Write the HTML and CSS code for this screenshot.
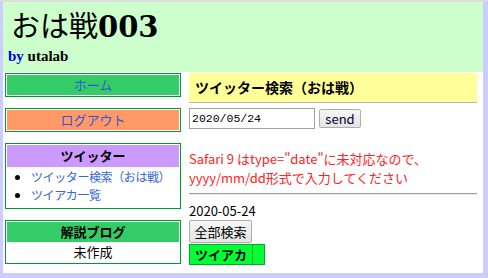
FILE: index.html
```html
<!DOCTYPE html>
<html lang="ja">
<head>
    <meta charset="UTF-8">
    <title>おは戦003</title>
    <link rel="stylesheet" href="styles.css">
</head>
<body>
    <div class="page">
        <header class="top">
            <h1><span class="jp">おは戦</span>003</h1>
            <p class="by"><span>by</span> utalab</p>
        </header>
        <div class="columns">
            <nav class="side">
                <div class="box home"><a href="#">ホーム</a></div>
                <div class="box logout"><a href="#">ログアウト</a></div>
                <div class="box">
                    <div class="box-title purple">ツイッター</div>
                    <ul>
                        <li><a href="#">ツイッター検索（おは戦）</a></li>
                        <li><a href="#">ツイアカ一覧</a></li>
                    </ul>
                </div>
                <div class="box">
                    <div class="box-title green">解説ブログ</div>
                    <div class="box-text">未作成</div>
                </div>
            </nav>
            <main class="main">
                <h2>ツイッター検索（おは戦）</h2>
                <form class="search">
                    <input type="text" value="2020/05/24">
                    <button type="button">send</button>
                </form>
                <p class="note">Safari 9 はtype="date"に未対応なので、<br>yyyy/mm/dd形式で入力してください</p>
                <hr>
                <div class="date">2020-05-24</div>
                <button type="button" class="all">全部検索</button>
                <table class="acct">
                    <tr><td>ツイアカ</td><td></td></tr>
                </table>
            </main>
        </div>
    </div>
</body>
</html>
```

FILE: styles.css
```css
/* General Styles */
body {
    margin: 0;
    background: #ccccff;
    border-top: 2px solid #dddddd;
    font-family: "Noto Sans CJK JP", "DejaVu Sans", sans-serif;
    font-size: 13px;
    color: #000;
}

.page {
    margin: 0 5px 5px 3px;
    background: #ffffff;
}

/* Header */
.top {
    background: #ccffcc;
    height: 70px;
    padding-left: 8px;
    box-sizing: border-box;
}

.top h1 {
    margin: 0;
    padding-top: 3px;
    font-family: "DejaVu Serif", "Noto Sans CJK JP", serif;
    font-size: 29px;
    font-weight: bold;
    line-height: 38px;
}

.top h1 .jp {
    font-family: "Noto Sans CJK JP", serif;
    font-weight: normal;
    font-size: 29px;
}

.by {
    margin: 0;
    margin-left: -3px;
    font-family: "Liberation Serif", serif;
    font-size: 15px;
    font-weight: bold;
    line-height: 20px;
}

.by span {
    color: #0000ee;
}

/* Columns */
.columns {
    display: flex;
    padding: 1px 6px 8px 2px;
}

.side {
    width: 176px;
    flex: none;
    display: flex;
    flex-direction: column;
    gap: 11px;
}

.box {
    border: 1px solid #009933;
    padding: 1px;
    text-align: center;
}

.box a {
    color: #3355dd;
    text-decoration: none;
}

.home, .logout {
    line-height: 20px;
}

.home a, .logout a {
    display: block;
}

.home a {
    background: #33cc66;
}

.logout a {
    background: #ff9966;
}

.box-title {
    font-weight: bold;
    line-height: 20px;
}

.purple {
    background: #cc99ff;
    line-height: 22px;
}

.green {
    background: #33cc66;
}

.box-text {
    line-height: 20px;
}

.box ul {
    margin: 1px 0 3px;
    padding-left: 24px;
    text-align: left;
    font-size: 12px;
    letter-spacing: -0.4px;
    line-height: 18px;
    white-space: nowrap;
}

.box ul a {
    color: #3366dd;
}

/* Main */
.main {
    flex: 1;
    margin-left: 8px;
}

.main h2 {
    margin: 0;
    background: #ffff99;
    border-bottom: 1px solid #bbbbbb;
    padding-left: 6px;
    font-size: 14px;
    line-height: 29px;
}

.search {
    margin: 5px 0 0;
    display: flex;
    align-items: center;
    gap: 4px;
}

.search input {
    width: 126px;
    height: 21px;
    box-sizing: border-box;
    border: 1px solid #a0a0a0;
    padding: 0 2px;
    font-family: "Liberation Mono", monospace;
    font-size: 11.5px;
    margin: 0;
}

.search button, .all {
    font-family: "Noto Sans CJK JP", sans-serif;
    font-size: 13px;
    background: linear-gradient(#f6f6f6, #e4e4e4);
    border: 1px solid #adadad;
    border-radius: 2px;
    padding: 0;
    margin: 0;
}

.search button {
    width: 42px;
    height: 19px;
    line-height: 17px;
    color: #000033;
}

.note {
    margin: 20px 0 0;
    color: #ff2222;
    line-height: 19px;
}

hr {
    margin: 6px 0 0;
    border: none;
    border-top: 1px solid #a0a0a0;
    border-bottom: 1px solid #e8e8e8;
}

.date {
    margin-top: 7px;
    line-height: 18px;
}

.all {
    display: block;
    width: 63px;
    height: 23px;
    line-height: 21px;
}

.acct {
    margin-top: 1px;
    border-collapse: collapse;
    background: #00ff33;
    border: 1px solid #00aa33;
}

.acct td {
    border: 1px solid #00aa33;
    height: 19px;
    padding: 0 5px;
    font-weight: bold;
    line-height: 19px;
}

.acct td:last-child {
    width: 1px;
}
```
